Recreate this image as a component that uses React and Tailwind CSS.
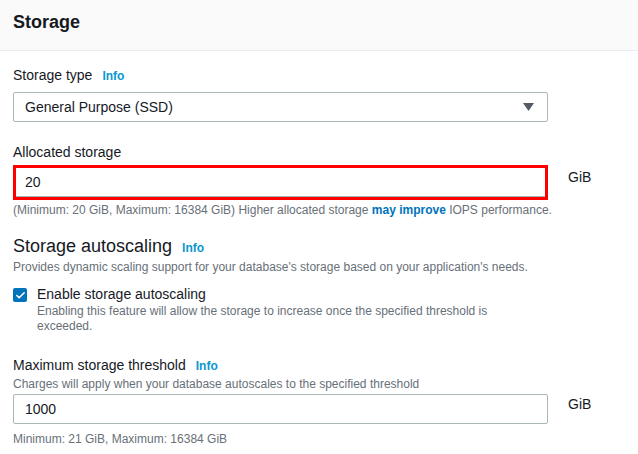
import { Check } from 'lucide-react';

const font = { fontFamily: '"Liberation Sans", Arial, sans-serif' };

function Info() {
    return <span className="ml-[10px] text-[12px] font-bold text-[#0a97d0]">Info</span>;
}

function GiB({ top }) {
    return <span className={`ml-5 text-[14px] leading-[20px] text-[#16191f] ${top}`}>GiB</span>;
}

export default function App() {
    return (
        <div className="w-[638px] h-[454px] bg-white overflow-hidden" style={font}>
            {/* Header */}
            <div className="h-[51px] bg-[#fafafa] border-b border-[#eaeded] px-[13px] pt-[10px]">
                <h2 className="text-[18px] leading-[24px] font-bold text-[#16191f]">Storage</h2>
            </div>

            <div className="px-[13px] pt-[14px]">
                {/* Storage type */}
                <div className="flex items-baseline text-[14px] leading-[20px] text-[#16191f]">
                    Storage type <Info />
                </div>
                <div className="mt-[6px] w-[535px] h-[30px] border border-[#aab7b8] rounded-[2px] flex items-center justify-between pl-[11px] pr-[13px] text-[14px] text-[#16191f]">
                    <span>General Purpose (SSD)</span>
                    <svg width="11" height="8" viewBox="0 0 11 8"><path d="M0 0h11L5.5 8z" fill="#545b64" /></svg>
                </div>

                {/* Allocated storage */}
                <div className="mt-[20px] text-[14px] leading-[20px] text-[#16191f]">Allocated storage</div>
                <div className="mt-[3px] flex">
                    <div className="w-[535px] h-[35px] border-[3px] border-[#ff0000]">
                        <div className="h-full border-b border-[#aab7b8] flex items-center pl-[9px] text-[14px] text-[#16191f]">
                            20
                        </div>
                    </div>
                    <GiB top="pt-[2px]" />
                </div>
                <div className="mt-[2px] text-[12px] leading-[16px] text-[#687078]">
                    (Minimum: 20 GiB, Maximum: 16384 GiB) Higher allocated storage <span className="font-bold text-[#0073bb]">may improve</span> IOPS performance.
                </div>

                {/* Autoscaling */}
                <div className="mt-[17px] flex items-baseline text-[18px] leading-[22px] text-[#16191f]">
                    Storage autoscaling <Info />
                </div>
                <div className="text-[12px] leading-[16px] text-[#687078]">
                    Provides dynamic scaling support for your database's storage based on your application's needs.
                </div>
                <div className="mt-[9px] flex">
                    <div className="mt-[4px] w-[14px] h-[14px] rounded-[2px] bg-[#0073bb] flex items-center justify-center shrink-0">
                        <Check size={11} strokeWidth={3.5} color="white" />
                    </div>
                    <div className="ml-[10px]">
                        <div className="text-[14px] text-[#16191f] leading-[20px]">Enable storage autoscaling</div>
                        <div className="text-[12px] text-[#687078] leading-[15px] w-[480px]">
                            Enabling this feature will allow the storage to increase once the specified threshold is exceeded.
                        </div>
                    </div>
                </div>

                {/* Threshold */}
                <div className="mt-[21px] flex items-baseline text-[14px] leading-[20px] text-[#16191f]">
                    Maximum storage threshold <Info />
                </div>
                <div className="text-[12px] leading-[16px] text-[#687078]">
                    Charges will apply when your database autoscales to the specified threshold
                </div>
                <div className="mt-[2px] flex">
                    <div className="w-[535px] h-[30px] border border-[#aab7b8] rounded-[2px] flex items-center pl-[11px] text-[14px] text-[#16191f]">
                        1000
                    </div>
                    <GiB top="pt-0" />
                </div>
                <div className="mt-[7px] text-[12px] leading-[16px] text-[#687078]">
                    Minimum: 21 GiB, Maximum: 16384 GiB
                </div>
            </div>
        </div>
    );
}
